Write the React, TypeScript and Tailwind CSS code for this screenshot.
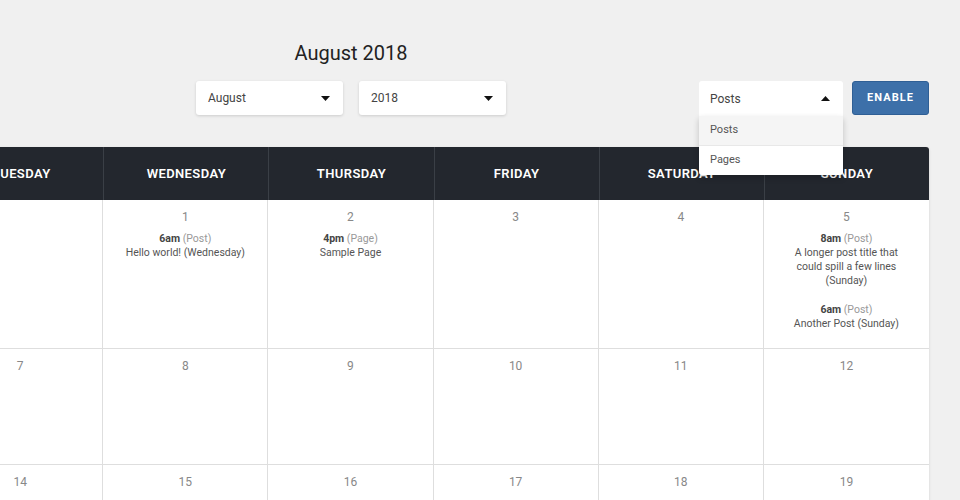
const DAYS = ["Monday", "Tuesday", "Wednesday", "Thursday", "Friday", "Saturday", "Sunday"];

type Ev = { time: string; type: string; title: string[] };

const EVENTS: Record<number, Ev[]> = {
  1: [{ time: "6am", type: "Post", title: ["Hello world! (Wednesday)"] }],
  2: [{ time: "4pm", type: "Page", title: ["Sample Page"] }],
  5: [
    { time: "8am", type: "Post", title: ["A longer post title that", "could spill a few lines", "(Sunday)"] },
    { time: "6am", type: "Post", title: ["Another Post (Sunday)"] },
  ],
};

const WEEKS: (number | null)[][] = [
  [null, null, 1, 2, 3, 4, 5],
  [6, 7, 8, 9, 10, 11, 12],
  [13, 14, 15, 16, 17, 18, 19],
];

function Caret({ up = false }: { up?: boolean }) {
  return (
    <svg width="9" height="5" viewBox="0 0 9 5" className="shrink-0">
      {up ? <path d="M0 5 L4.5 0 L9 5 Z" fill="#111" /> : <path d="M0 0 L9 0 L4.5 5 Z" fill="#111" />}
    </svg>
  );
}

function Select({ label }: { label: string }) {
  return (
    <div className="flex h-[34px] w-[147px] items-center justify-between rounded-[3px] bg-white pl-[12px] pr-[13px] text-[12px] text-[#444] shadow-[0_1px_3px_rgba(0,0,0,0.15)]">
      <span>{label}</span>
      <Caret />
    </div>
  );
}

export default function App() {
  return (
    <div className="h-[500px] w-[960px] overflow-hidden bg-[#f0f0f0] font-['Roboto','Liberation_Sans',sans-serif]">
      <div className="ml-[-227px] w-[1156px] pt-[39px]">
        <h1 className="text-center text-[20px] leading-[28px] text-[#222]">August 2018</h1>

        <div className="mt-[14px] grid h-[34px] grid-cols-[1fr_auto_1fr]">
          <div />
          <div className="flex gap-[16px]">
            <Select label="August" />
            <Select label="2018" />
          </div>
          <div className="flex justify-end gap-[9px]">
            <div className="relative z-10 w-[144px]">
              <div className="flex h-[35px] items-center justify-between rounded-t-[3px] bg-white pl-[11px] pr-[13px] text-[12px] text-[#444]">
                <span>Posts</span>
                <Caret up />
              </div>
              <div className="rounded-b-[3px] bg-white text-[11px] text-[#555] shadow-[0_3px_6px_rgba(0,0,0,0.2)]">
                <div className="flex h-[30px] items-center border-b border-[#e8e8e8] bg-[#f5f5f5] pl-[11px]">Posts</div>
                <div className="flex h-[29px] items-center pl-[11px]">Pages</div>
              </div>
            </div>
            <button className="h-[34px] w-[77px] rounded-[3px] border border-[#2f5f95] bg-[#3d70a9] text-[11px] font-bold tracking-[0.1em] text-white">
              ENABLE
            </button>
          </div>
        </div>

        <div className="mt-[32px] overflow-hidden rounded-t-[3px] shadow-[0_1px_3px_rgba(0,0,0,0.12)]">
          <div className="grid h-[53px] grid-cols-7 bg-[#23272e]">
            {DAYS.map((d, i) => (
              <div
                key={d}
                className={`flex items-center justify-center text-[13px] font-semibold uppercase tracking-[0.03em] text-white ${
                  i > 0 ? "border-l border-[#3a3f46]" : ""
                }`}
              >
                {d}
              </div>
            ))}
          </div>
          {WEEKS.map((week, w) => (
            <div key={w} className="grid grid-cols-7 bg-white">
              {week.map((day, i) => (
                <div
                  key={i}
                  className={`min-h-[116px] border-b border-[#dedede] pb-[17px] pt-[9px] text-center ${
                    i < 6 ? "border-r" : ""
                  }`}
                >
                  {day !== null && (
                    <>
                      <div className="text-[12px] leading-[16px] text-[#888]">{day}</div>
                      <div className="mt-[7px] flex flex-col gap-[15px]">
                        {(EVENTS[day] ?? []).map((ev, k) => (
                          <div key={k} className="text-[10.5px] leading-[14px] text-[#555]">
                            <div>
                              <span className="font-bold text-[#444]">{ev.time}</span>{" "}
                              <span className="text-[#999]">({ev.type})</span>
                            </div>
                            {ev.title.map((t) => (
                              <div key={t}>{t}</div>
                            ))}
                          </div>
                        ))}
                      </div>
                    </>
                  )}
                </div>
              ))}
            </div>
          ))}
        </div>
      </div>
    </div>
  );
}
